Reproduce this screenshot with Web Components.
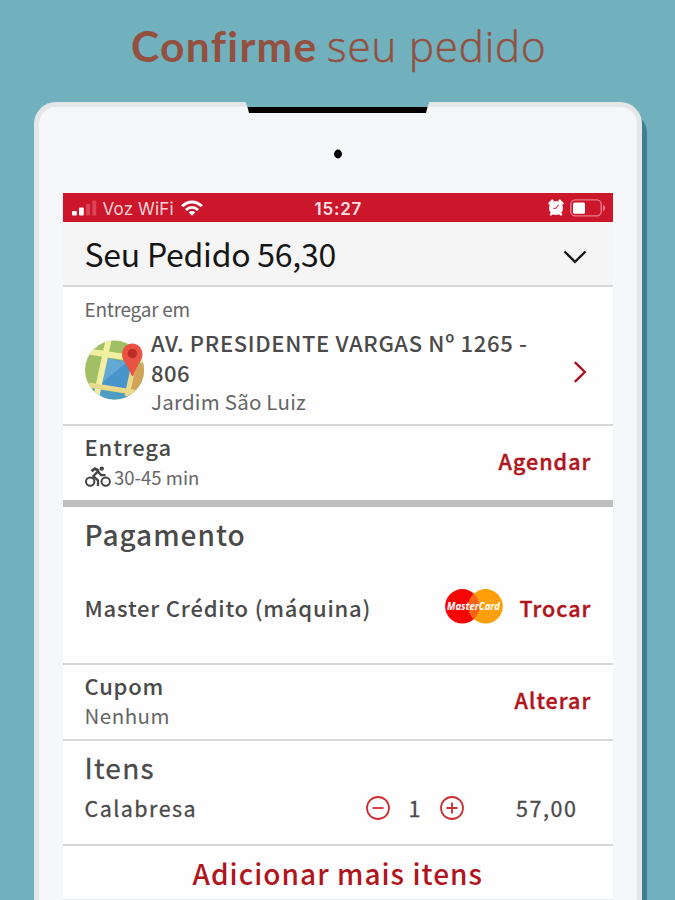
<!DOCTYPE html>
<html lang="pt-BR">
<head>
<meta charset="utf-8">
<title>Confirme seu pedido</title>
<style>
  html, body {
    margin: 0;
    height: 100%;
  }
  body {
    height: 900px;
    overflow: hidden;
    background: #71b0bd;
    font-family: "Noto Sans CJK SC", "Noto Sans", sans-serif;
    color: #4a4a4a;
  }
</style>
</head>
<body>
<order-page></order-page>

<script>
/**
 * a line of text, tracked so that it fills the given width
 */
class FitText extends HTMLElement {

  constructor() {
    super();
    this.attachShadow({ mode: 'open' });
  }

  getHTML() {
    const size = this.getAttribute('size');
    const line = this.getAttribute('line');
    const weight = this.getAttribute('weight') || 400;

    return `
      <style>
        :host {
          display: block;
          flex: none;
          width: ${this.getAttribute('width')}px;
          height: ${line}px;
          font-size: ${size}px;
          font-weight: ${weight};
          line-height: ${line}px;
          white-space: nowrap;
        }
        span { display: block; }
      </style>
      <span><slot></slot></span>
    `;
  }

  connectedCallback() {
    this.shadowRoot.innerHTML = this.getHTML();
    const style = getComputedStyle(this);
    const text = this.textContent;
    const ctx = document.createElement('canvas').getContext('2d');
    ctx.font = `${style.fontWeight} ${style.fontSize} ${style.fontFamily}`;
    const ink = ctx.measureText(text).actualBoundingBoxRight;
    if (text.length > 1) {
      const span = this.shadowRoot.querySelector('span');
      span.style.letterSpacing = `${(this.getAttribute('width') - ink) / (text.length - 1)}px`;
    }
  }
}

class PageTitle extends HTMLElement {

  constructor() {
    super();
    this.attachShadow({ mode: 'open' });
  }

  connectedCallback() {
    this.shadowRoot.innerHTML = `
      <style>
        :host {
          display: flex;
          gap: 12px;
          padding: 21px 0 0 131px;
          height: 80px;
          box-sizing: border-box;
          color: #93503f;
          font-family: Lato, sans-serif;
        }
        .light {
          font-family: "Open Sans", sans-serif;
          -webkit-text-stroke: 0.5px currentColor;
        }
      </style>
      <fit-text size="42.5" line="50" weight="700" width="184">Confirme</fit-text>
      <fit-text class="light" size="42" line="50" weight="300" width="217">seu pedido</fit-text>
    `;
  }
}

/**
 * tablet body: bezel, notch and camera, with the screen in the slot
 */
class TabletFrame extends HTMLElement {

  constructor() {
    super();
    this.attachShadow({ mode: 'open' });
  }

  connectedCallback() {
    this.shadowRoot.innerHTML = `
      <style>
        :host {
          display: block;
          position: relative;
          box-sizing: border-box;
          width: 608px;
          height: 840px;
          margin: 22px 0 0 34px;
          padding: 86px 0 0 24px;
          border: 5.5px solid #e4e6e7;
          border-radius: 22px;
          background: #f5f7f9;
          box-shadow: 6px 9px 0 -1px #417f90;
        }
        .notch {
          position: absolute;
          left: 206px;
          top: -6px;
        }
        .camera {
          position: absolute;
          left: 294px;
          top: 42px;
        }
      </style>
      <svg class="notch" width="186" height="13" viewBox="0 0 186 13">
        <path d="M0 0H185L182 7H3Z" fill="#71b0bd"/>
        <path d="M2.5 6H182.5L181 12H4Z" fill="#000"/>
      </svg>
      <svg class="camera" width="10" height="10" viewBox="0 0 10 10">
        <ellipse cx="5" cy="5" rx="4" ry="4.4" fill="#000"/>
      </svg>
      <slot></slot>
    `;
  }
}

class StatusBar extends HTMLElement {

  constructor() {
    super();
    this.attachShadow({ mode: 'open' });
  }

  connectedCallback() {
    this.shadowRoot.innerHTML = `
      <style>
        :host {
          display: grid;
          grid-template-columns: 252px 1fr auto;
          align-items: center;
          box-sizing: border-box;
          height: 29px;
          padding: 0 7px 0 0;
          background: #cb162c;
          color: #f7d3d7;
          font-family: Inter, sans-serif;
        }
        .left, .right {
          display: flex;
          align-items: center;
        }
        .left { padding-left: 9px; }
        .left fit-text { margin: 2px 7px 0 6px; }
        .time { margin-top: 2px; color: #fbe3e5; }
        .right { gap: 6px; }
        svg { display: block; }
      </style>
      <div class="left">
        <svg width="25" height="16" viewBox="0 0 25 16">
          <rect x="0" y="11" width="4.8" height="4.4" rx="1" fill="#fff"/>
          <rect x="7" y="7.5" width="4.8" height="7.9" rx="1" fill="#fff"/>
          <rect x="14" y="4" width="4" height="11.4" rx="1" fill="#d84658"/>
          <rect x="20.3" y="0.5" width="4" height="14.9" rx="1" fill="#d84658"/>
        </svg>
        <fit-text size="17" line="22" weight="400" width="71">Voz WiFi</fit-text>
        <svg width="22" height="16" viewBox="0 0 22 16">
          <g fill="none" stroke="#fff" stroke-width="3">
            <path d="M1.2 6.2C6.6 0.5 15.4 0.5 20.8 6.2"/>
            <path d="M5 10C8.4 6.5 13.6 6.5 17 10" stroke-width="2.7"/>
          </g>
          <path d="M7.6 12.2C9.5 10.6 12.5 10.6 14.4 12.2L11 15.8Z" fill="#fff"/>
        </svg>
      </div>
      <fit-text class="time" size="17" line="22" weight="600" width="47">15:27</fit-text>
      <div class="right">
        <svg width="16" height="17" viewBox="0 0 16 17">
          <circle cx="8" cy="9" r="7" fill="#fff"/>
          <path d="M1.6 4.4L4.4 1.6M14.4 4.4L11.6 1.6M3 15.4L4.5 14M13 15.4L11.5 14" stroke="#fff" stroke-width="2.4" stroke-linecap="round"/>
          <path d="M10.6 5.8L7.8 9.4H5.4" fill="none" stroke="#cb4a60" stroke-width="1.3"/>
        </svg>
        <svg width="36" height="18" viewBox="0 0 36 18">
          <rect x="0.8" y="0.9" width="30.4" height="16" rx="4.5" fill="none" stroke="#e67c8a" stroke-width="1.4"/>
          <rect x="3" y="3.4" width="12" height="11.4" rx="1.6" fill="#fff"/>
          <path d="M33 5.8V12.2Q35.2 11 35.2 9T33 5.8Z" fill="#e67c8a"/>
        </svg>
      </div>
    `;
  }
}

/**
 * white row of the order sheet with a rule under it
 */
class OrderRow extends HTMLElement {

  constructor() {
    super();
    this.attachShadow({ mode: 'open' });
  }

  static get observedAttributes() {
    return ['height', 'rule'];
  }

  getHTML() {
    return `
      <style>
        :host {
          display: flex;
          justify-content: space-between;
          box-sizing: border-box;
          height: ${this.getAttribute('height')}px;
          padding: 0 22px;
          background: #fefefe;
          border-bottom: ${this.getAttribute('rule') || 2}px solid #d6d7d8;
        }
        :host([rule="7"]) { border-bottom-color: #bebebe; }
        :host([rule="1"]) { border-bottom-color: #e8e9ea; }
        :host([bar]) { background: #f5f5f5; }
        .main, .side {
          display: flex;
          flex-direction: column;
        }
        ::slotted([slot="side"]) { color: #b0141c; }
      </style>
      <div class="main"><slot></slot></div>
      <div class="side"><slot name="side"></slot></div>
    `;
  }

  connectedCallback() {
    this.shadowRoot.innerHTML = this.getHTML();
  }

  attributeChangedCallback() {
    this.shadowRoot.innerHTML = this.getHTML();
  }
}

const ICONS = {
  down: `<svg width="24" height="14" viewBox="0 0 24 14">
    <path d="M1.5 1.5L12 11.8L22.5 1.5" fill="none" stroke="#181818" stroke-width="2.4"/></svg>`,
  right: `<svg width="14" height="22" viewBox="0 0 14 22">
    <path d="M1.8 1.2L11.8 11L1.8 20.8" fill="none" stroke="#b0141c" stroke-width="2.4"/></svg>`,
  map: `<svg width="60" height="60" viewBox="0 0 60 60">
    <defs><clipPath id="disc"><circle cx="29.5" cy="30" r="29.5"/></clipPath></defs>
    <g clip-path="url(#disc)">
      <rect width="60" height="60" fill="#a1bf65"/>
      <path d="M38 36L60 22V60H40Z" fill="#d0a357"/>
      <path d="M0 47L60 57V60H0Z" fill="#4c9cc4"/>
      <path d="M21 18L45 22V50L15 46Z" fill="#4795ca"/>
      <path d="M21 18L42 22L18 42Z" fill="#62a9d6"/>
      <path d="M0 11L60 20M24 -2L11 58" stroke="#f3efa0" stroke-width="6" fill="none"/>
      <path d="M4 45L60 54M49 24L42 56" stroke="#ead98c" stroke-width="5" fill="none"/>
    </g>
    <path d="M47.5 3.5C41 3.5 37 8.5 37 14.5C37 21 43 25 46.5 35.5Q47.5 37 48.5 35.5C51.5 25 57.5 21 57.5 14.5C57.5 8.5 53.5 3.5 47.5 3.5Z" fill="#ec5244"/>
    <circle cx="47.3" cy="13.5" r="4.8" fill="#bd2e2b"/></svg>`,
  bike: `<svg width="26" height="22" viewBox="0 0 26 22">
    <g fill="none" stroke="#444" stroke-width="2">
      <circle cx="5.2" cy="15.6" r="4.2"/><circle cx="20.7" cy="15.6" r="4.2"/>
      <path d="M13 20V14.3L8.2 10.2L13 5.4L16.2 9.2H20.5" stroke-width="2.3" stroke-linejoin="round"/>
      <path d="M6.5 5.2L10 2.6L14 5" stroke-width="2.8"/>
    </g>
    <circle cx="16.8" cy="2.6" r="2.2" fill="#444"/></svg>`,
  minus: `<svg width="24" height="24" viewBox="0 0 24 24">
    <g fill="none" stroke="#cc3036" stroke-width="1.8"><circle cx="12" cy="12" r="11"/><path d="M6.5 12H17.5"/></g></svg>`,
  plus: `<svg width="24" height="24" viewBox="0 0 24 24">
    <g fill="none" stroke="#cc3036" stroke-width="1.8"><circle cx="12" cy="12" r="11"/><path d="M6.5 12H17.5M12 6.5V17.5"/></g></svg>`,
  mastercard: `<svg width="58" height="35" viewBox="0 0 58 35">
    <circle cx="17.3" cy="17.3" r="17.2" fill="#f60507"/>
    <circle cx="40.6" cy="17.3" r="17.2" fill="#fc9f0b"/>
    <path d="M29 4.7A17.2 17.2 0 0 1 29 29.9A17.2 17.2 0 0 1 29 4.7Z" fill="#f8651a"/>
    <text x="2" y="21.3" textLength="53" lengthAdjust="spacingAndGlyphs" fill="#fff" font-family="Open Sans, sans-serif" font-size="11" font-weight="700" font-style="italic">MasterCard</text></svg>`
};

class AppIcon extends HTMLElement {

  constructor() {
    super();
    this.attachShadow({ mode: 'open' });
  }

  connectedCallback() {
    this.shadowRoot.innerHTML = `
      <style>
        :host { display: block; flex: none; }
        svg { display: block; overflow: visible; }
      </style>
      ${ICONS[this.getAttribute('name')]}
    `;
  }
}

class QuantityStepper extends HTMLElement {

  constructor() {
    super();
    this.attachShadow({ mode: 'open' });
  }

  connectedCallback() {
    this.shadowRoot.innerHTML = `
      <style>
        :host {
          display: flex;
          align-items: center;
          justify-content: space-between;
          width: 98px;
        }
      </style>
      <app-icon name="minus"></app-icon>
      <slot></slot>
      <app-icon name="plus"></app-icon>
    `;
  }
}

class OrderPage extends HTMLElement {

  constructor() {
    super();
    this.attachShadow({ mode: 'open' });
  }

  getHTML() {
    return `
      <style>
        :host {
          display: block;
          height: 900px;
          overflow: hidden;
        }
        .screen {
          width: 550px;
          margin-left: -0.5px;
        }
        .flex { display: flex; }
        .muted { color: #666; }
        .action { -webkit-text-stroke: 0.4px currentColor; }
        .medium { -webkit-text-stroke: 0.3px currentColor; }
        .total { margin-top: 11px; color: #161616; }
        .down { margin: 28px 4px 0 0; }
        .address { margin-top: 7px; gap: 6.5px; }
        .address app-icon { margin-top: 11.5px; }
        .right { margin: 74px 4px 0 0; }
        .eta { gap: 3.5px; }
        .eta app-icon { margin-top: 5px; }
        .card { align-items: flex-start; gap: 17px; margin-top: 82px; }
        .amount { align-items: center; gap: 52.5px; margin: 53px 15.5px 0 0; }
        .amount fit-text { color: #4a4a4a; }
        .add { margin: 9px 0 0 108px; color: #b0141c; }
      </style>
      <page-title></page-title>
      <tablet-frame>
        <div class="screen">
          <status-bar></status-bar>
          <order-row height="65" bar>
            <fit-text class="total" size="32" line="40" width="251">Seu Pedido 56,30</fit-text>
            <app-icon class="down" slot="side" name="down"></app-icon>
          </order-row>
          <order-row height="139">
            <fit-text class="muted" style="margin-top:10px" size="19" line="24" width="104">Entregar em</fit-text>
            <div class="flex address">
              <app-icon name="map"></app-icon>
              <div>
                <fit-text size="22" line="29.5" weight="500" width="375">AV. PRESIDENTE VARGAS Nº 1265 -</fit-text>
                <fit-text size="22" line="29.5" weight="500" width="38">806</fit-text>
                <fit-text class="muted" size="20.5" line="29" width="155">Jardim São Luiz</fit-text>
              </div>
            </div>
            <app-icon class="right" slot="side" name="right"></app-icon>
          </order-row>
          <order-row height="81" rule="7">
            <fit-text style="margin-top:5px" size="22" line="30" weight="500" width="85">Entrega</fit-text>
            <div class="flex eta">
              <app-icon name="bike"></app-icon>
              <fit-text class="muted" style="margin-top:1px" size="18.5" line="30" width="84">30-45 min</fit-text>
            </div>
            <fit-text class="action" slot="side" style="margin-top:20px" size="21.5" line="30" weight="500" width="92">Agendar</fit-text>
          </order-row>
          <order-row height="158">
            <fit-text style="margin-top:7px" size="28" line="40" weight="500" width="159">Pagamento</fit-text>
            <fit-text style="margin-top:37.5px" size="22" line="30" weight="500" width="284">Master Crédito (máquina)</fit-text>
            <div class="flex card" slot="side">
              <app-icon name="mastercard"></app-icon>
              <fit-text class="action" style="margin-top:3.5px" size="21.5" line="30" weight="500" width="71">Trocar</fit-text>
            </div>
          </order-row>
          <order-row height="76">
            <fit-text style="margin-top:5px" size="22" line="30" weight="500" width="77">Cupom</fit-text>
            <fit-text class="muted" style="margin-top:1px" size="20.5" line="29" width="84">Nenhum</fit-text>
            <fit-text class="action" slot="side" style="margin-top:20px" size="21.5" line="30" weight="500" width="76">Alterar</fit-text>
          </order-row>
          <order-row height="105">
            <fit-text class="medium" style="margin-top:6px" size="28" line="40" weight="400" width="69">Itens</fit-text>
            <fit-text class="medium" style="margin-top:7px" size="21.5" line="28" weight="400" width="110">Calabresa</fit-text>
            <div class="flex amount" slot="side">
              <quantity-stepper>
                <fit-text class="medium" size="21.5" line="28" width="12">1</fit-text>
              </quantity-stepper>
              <fit-text class="medium" size="21.5" line="28" width="59">57,00</fit-text>
            </div>
          </order-row>
          <order-row height="54" rule="1">
            <fit-text class="add" size="28" line="36" weight="500" width="289">Adicionar mais itens</fit-text>
          </order-row>
        </div>
      </tablet-frame>
    `;
  }

  connectedCallback() {
    this.shadowRoot.innerHTML = this.getHTML();
  }
}

customElements.define('fit-text', FitText);
customElements.define('page-title', PageTitle);
customElements.define('tablet-frame', TabletFrame);
customElements.define('status-bar', StatusBar);
customElements.define('app-icon', AppIcon);
customElements.define('order-row', OrderRow);
customElements.define('quantity-stepper', QuantityStepper);
customElements.define('order-page', OrderPage);
</script>
</body>
</html>
